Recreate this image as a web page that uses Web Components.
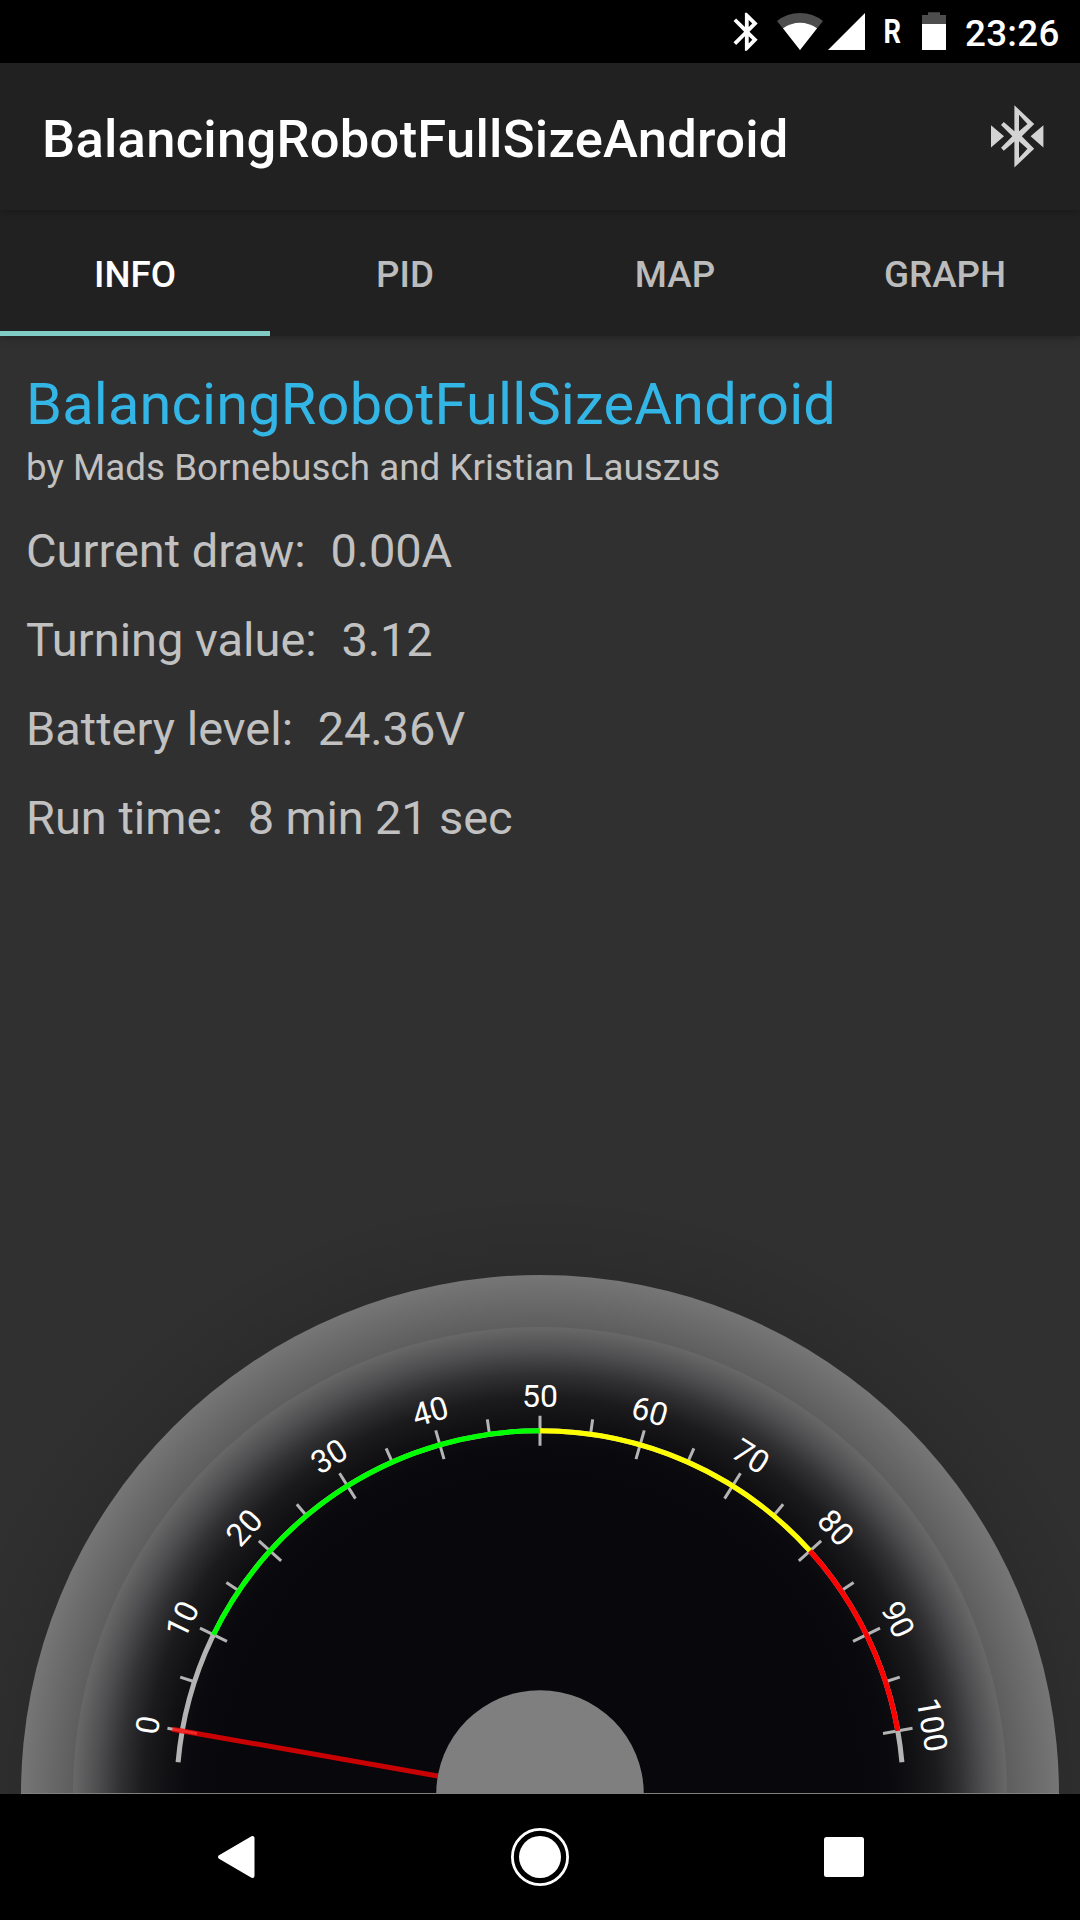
<!DOCTYPE html>
<html lang="en">
<head>
<meta charset="utf-8">
<title>BalancingRobotFullSizeAndroid</title>
<style>
html,body{margin:0;padding:0;background:#000}
body{font-family:Roboto,"Noto Sans",sans-serif;width:1080px;height:1920px;overflow:hidden}
</style>
</head>
<body>
<robot-app></robot-app>
<script>
function define(name, html, setup) {
  customElements.define(name, class extends HTMLElement {
    constructor() {
      super();
      this.attachShadow({ mode: 'open' }).innerHTML = html;
    }
    connectedCallback() { if (setup) setup(this, this.shadowRoot); }
  });
}

define('status-bar', `
<style>
:host{display:flex;height:63px;flex:none;background:#000;color:#fff;justify-content:flex-end}
svg{display:block}
.clock{font-size:36.75px;font-weight:500;line-height:63px;letter-spacing:.3px;padding:2px 21px 0 0;height:61px;width:94px;text-align:right;white-space:nowrap}
</style>
<svg width="240" height="63" viewBox="725 0 240 63">
  <path fill="#fff" fill-rule="evenodd" transform="translate(724 8.9) scale(1.9)" d="M17.71 7.71L12 2h-1v7.59L6.41 5 5 6.41 10.59 12 5 17.59 6.41 19 11 14.41V22h1l5.71-5.71-4.3-4.29zM13 5.83l1.88 1.88L13 9.59zM14.88 16.29L13 18.17v-3.76z"/>
  <path fill="#4d4d4d" d="M777 21Q787 13 800 13T823 21L800 50Z"/>
  <path fill="#fff" d="M783 28.3Q791 22.8 800 22.8T817 28.3L800 50Z"/>
  <path fill="#fff" d="M828 50H865V13Z"/>
  <text x="883.5" y="43" font-size="33" font-weight="700" fill="#fff" textLength="17.5" lengthAdjust="spacingAndGlyphs">R</text>
  <path fill="#4d4d4d" d="M922 15H928V12.3H940V15H946V25H922Z"/>
  <rect x="922" y="24" width="24" height="26" fill="#fff"/>
</svg>
<div class="clock">23:26</div>`);

define('app-bar', `
<style>
:host{display:flex;height:147px;flex:none;background:#212121;color:#fff;align-items:center;justify-content:space-between;
position:relative;z-index:2;box-shadow:0 2px 8px rgba(0,0,0,.28)}
h1{margin:0;padding:5px 0 0 42px;font-size:52.5px;font-weight:500;line-height:62px;letter-spacing:.26px}
svg{display:block;margin-right:32px}
</style>
<h1><slot></slot></h1>
<svg width="62" height="70" viewBox="986 101.7 62 70" fill="#d3d3d3">
  <path d="M991 125V147.2L1004 136ZM1043.4 125V147.2L1030.6 136Z"/>
  <path fill-rule="evenodd" d="M1014.4 105L1034.2 123.7 1021.8 136 1034.2 148.4 1014.4 167.2V141.3L1003.8 150.4 1001 147.5 1012.3 136 1001 124.6 1003.8 121.7 1014.4 130.9ZM1019 114.5V131L1027.4 123.7ZM1019 141V157.6L1027.4 148.4Z"/>
</svg>`);

define('tab-item', `
<style>
:host{display:flex;flex:1;align-items:center;justify-content:center;box-sizing:border-box;padding-top:8px;border-bottom:5px solid transparent;
font-size:36.75px;font-weight:500;line-height:44px;color:#bcbcbc}
:host([selected]){color:#fff;border-bottom-color:#80cbc4}
</style><slot></slot>`);

define('tab-strip', `
<style>
:host{display:flex;height:126px;flex:none;background:#212121;position:relative;z-index:1;box-shadow:0 2px 8px rgba(0,0,0,.28)}
</style><slot></slot>`);

define('info-row', `
<style>
:host{display:flex;font-size:47px;line-height:56px;color:#c1c1c1}
span{white-space:pre}
.v{margin-left:1.5px;letter-spacing:-.15px}
</style><span><slot></slot>:  </span><span class="v"></span>`,
(el, root) => { root.querySelector('.v').textContent = el.getAttribute('value'); });

define('speedometer-gauge', `
<style>:host{display:block}svg{display:block}text{font-size:32px;fill:#fff;text-anchor:middle}</style>
<svg width="1080" height="600" viewBox="0 1194 1080 600">
  <defs>
    <radialGradient id="halo" gradientUnits="userSpaceOnUse" cx="540" cy="1794" r="600">
      <stop offset=".86" stop-color="#000" stop-opacity=".09"/><stop offset="1" stop-color="#000" stop-opacity="0"/>
    </radialGradient>
    <radialGradient id="rim" gradientUnits="userSpaceOnUse" cx="540" cy="1794" r="519">
      <stop offset=".9" stop-color="#5e5e5e"/><stop offset="1" stop-color="#767676"/>
    </radialGradient>
    <radialGradient id="face" gradientUnits="userSpaceOnUse" cx="540" cy="1794" r="467">
      <stop offset=".68" stop-color="#08070c"/><stop offset=".75" stop-color="#0a0a0e"/><stop offset=".8" stop-color="#111114"/>
      <stop offset=".85" stop-color="#1b1b1d"/><stop offset=".9" stop-color="#313133"/><stop offset=".95" stop-color="#4f4f51"/>
      <stop offset="1" stop-color="#686868"/>
    </radialGradient>
  </defs>
  <circle cx="540" cy="1794" r="600" fill="url(#halo)"/>
  <circle cx="540" cy="1794" r="519" fill="url(#rim)"/>
  <circle cx="540" cy="1794" r="467" fill="url(#face)"/>
  <g id="ticks" stroke="#b4b4b4" stroke-width="3"></g>
  <g id="arcs" fill="none" stroke-width="5"></g>
  <g id="labels"></g>
  <path id="needle" stroke="#f00" stroke-opacity=".78" stroke-width="5"/>
  <rect x="21" y="1793" width="1038" height="1" fill="#7f7f7f"/>
  <circle cx="540" cy="1794" r="103.8" fill="#7f7f7f"/>
</svg>`,
(el, root) => {
  const CX = 540, CY = 1794, R = 363.3;
  // Angles run clockwise from the left end of the half dial.
  const point = (deg, r) => {
    const a = deg * Math.PI / 180;
    return (CX - Math.cos(a) * r).toFixed(2) + ' ' + (CY - Math.sin(a) * r).toFixed(2);
  };
  const line = (deg, r1, r2) => `M${point(deg, r1)}L${point(deg, r2)}`;
  const arc = (a, b, color) => `<path stroke="${color}" d="M${point(a, R)}A${R} ${R} 0 0 1 ${point(b, R)}"/>`;
  let ticks = '', labels = '';
  for (let v = 0; v <= 100; v += 5) {
    const deg = 10 + v * 1.6;
    if (v % 10) { ticks += line(deg, R, R + 15); continue; }
    ticks += line(deg, R - 15, R + 15);
    labels += `<text x="${CX}" y="${CY - R - 23.7}" transform="rotate(${deg - 90} ${CX} ${CY})">${v}</text>`;
  }
  root.getElementById('ticks').innerHTML = `<path d="${ticks}"/>`;
  root.getElementById('labels').innerHTML = labels;
  root.getElementById('arcs').innerHTML =
    arc(5, 175, '#b4b4b4') + arc(26, 90, '#0f0') + arc(90, 138, '#ff0') + arc(138, 170, '#f00');
  root.getElementById('needle').setAttribute('d', line(10 + 1.6 * Number(el.getAttribute('value')), 103.8, R + 10));
});

define('nav-bar', `
<style>
:host{display:flex;height:126px;flex:none;background:#000;align-items:center;justify-content:space-between;box-sizing:border-box;padding:0 211px}
svg{display:block}
</style>
<svg width="50" height="60" viewBox="211 1827 50 60"><path d="M220 1857L252.5 1838V1876Z" fill="#fff" stroke="#fff" stroke-width="4" stroke-linejoin="round"/></svg>
<svg width="60" height="60" viewBox="510 1827 60 60"><circle cx="540" cy="1857" r="27.6" fill="none" stroke="#fff" stroke-width="2.8"/><circle cx="540" cy="1857" r="21" fill="#fff"/></svg>
<svg width="50" height="60" viewBox="819 1827 50 60"><rect x="824" y="1837" width="40" height="40" rx="2.5" fill="#fff"/></svg>`);

define('robot-app', `
<style>
:host{display:flex;flex-direction:column;width:1080px;height:1920px;background:#303030;overflow:hidden}
main{flex:1;display:flex;flex-direction:column;min-height:0}
.info{padding:34px 26px 0;color:#c1c1c1;display:flex;flex-direction:column}
h2{margin:0;font-size:57.75px;font-weight:400;line-height:68px;letter-spacing:.17px;color:#33b5e5}
p{margin:8px 0 33px;font-size:36.75px;line-height:44px;letter-spacing:.04px}
.rows{display:flex;flex-direction:column;gap:33px}
speedometer-gauge{margin-top:auto}
</style>
<status-bar></status-bar>
<app-bar>BalancingRobotFullSizeAndroid</app-bar>
<tab-strip><tab-item selected>INFO</tab-item><tab-item>PID</tab-item><tab-item>MAP</tab-item><tab-item>GRAPH</tab-item></tab-strip>
<main>
  <div class="info">
    <h2>BalancingRobotFullSizeAndroid</h2>
    <p>by Mads Bornebusch and Kristian Lauszus</p>
    <div class="rows">
      <info-row value="0.00A">Current draw</info-row>
      <info-row value="3.12">Turning value</info-row>
      <info-row value="24.36V">Battery level</info-row>
      <info-row value="8 min 21 sec">Run time</info-row>
    </div>
  </div>
  <speedometer-gauge value="0"></speedometer-gauge>
</main>
<nav-bar></nav-bar>`);
</script>
</body>
</html>
